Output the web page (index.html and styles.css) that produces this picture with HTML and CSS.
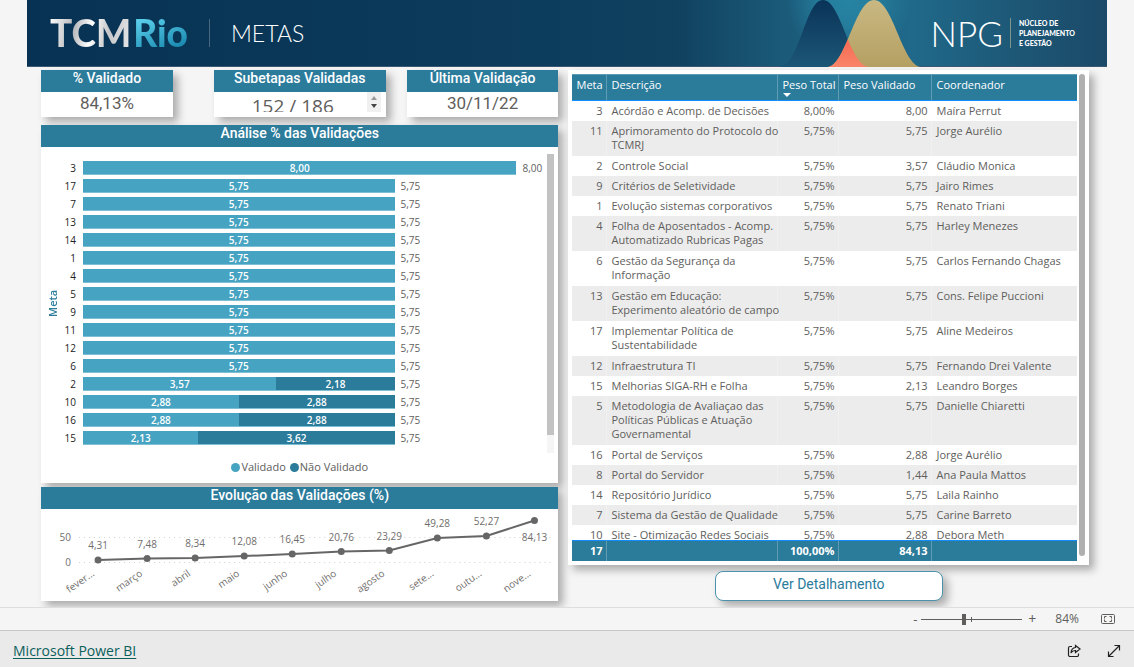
FILE: index.html
```html
<!DOCTYPE html>
<html lang="pt-BR">
<head>
<meta charset="utf-8">
<title>Metas - TCMRio</title>
<link rel="stylesheet" href="styles.css">
</head>
<body>
<main class="report">
  <header class="banner">
    <div class="logo"><span class="logo-tcm">TCM</span><span class="logo-rio">Rio</span></div>
    <h1 class="page-name">METAS</h1>
    <svg class="curves" viewBox="0 0 200 67" aria-hidden="true">
      <defs>
        <linearGradient id="dark" x1="0" y1="0" x2="0" y2="1"><stop offset="0" stop-color="#0a3358"/><stop offset="1" stop-color="#1c5777"/></linearGradient>
        <linearGradient id="gold" x1="0" y1="0" x2="0" y2="1"><stop offset="0" stop-color="#c9b883"/><stop offset="1" stop-color="#b5a062"/></linearGradient>
        <linearGradient id="coral" x1="0" y1="0" x2="0" y2="1"><stop offset=".5" stop-color="#f4634f"/><stop offset="1" stop-color="#f98469"/></linearGradient>
        <radialGradient id="glow" cx="88" cy="0" r="62" gradientUnits="userSpaceOnUse"><stop offset="0" stop-color="#2784a3"/><stop offset=".4" stop-color="#2784a3" stop-opacity=".8"/><stop offset="1" stop-color="#2784a3" stop-opacity="0"/></radialGradient>
        <clipPath id="left-bell"><path d="M18 67C40 64 44 0 62 0C80 0 88 65 108 67Z"/></clipPath>
      </defs>
      <rect width="200" height="67" fill="url(#glow)"/>
      <path d="M18 67C40 64 44 0 62 0C80 0 88 65 108 67Z" fill="url(#dark)"/>
      <path d="M67 67C85 65 94 0 113 0C132 0 141 65 160 67Z" fill="url(#gold)"/>
      <path d="M67 67C85 65 94 0 113 0C132 0 141 65 160 67Z" fill="url(#coral)" clip-path="url(#left-bell)"/>
    </svg>
    <div class="npg"><span class="npg-name">NPG</span><span class="npg-full">NÚCLEO DE<br>PLANEJAMENTO<br>E GESTÃO</span></div>
  </header>

  <div class="columns">
    <div class="left">
      <div class="cards">
        <section class="panel card card-first"><h2 class="title">% Validado</h2><p class="value">84,13%</p></section>
        <section class="panel card"><h2 class="title">Subetapas Validadas</h2>
          <div class="stepper"><p class="value value-clipped">152 / 186</p>
            <div class="steps"><button class="step step-up" aria-label="Anterior"></button><button class="step step-down" aria-label="Próximo"></button></div>
          </div></section>
        <section class="panel card"><h2 class="title">Última Validação</h2><p class="value">30/11/22</p></section>
      </div>

      <section class="panel analysis">
        <h2 class="title">Análise % das Validações</h2>
        <div class="chart">
          <span class="axis-name">Meta</span>
          <div class="bars">
            <div class="bar-row"><span class="cat">3</span><div class="track"><span class="seg done" style="width:100%">8,00</span><span class="total">8,00</span></div></div>
            <div class="bar-row"><span class="cat">17</span><div class="track"><span class="seg done" style="width:71.875%">5,75</span><span class="total">5,75</span></div></div>
            <div class="bar-row"><span class="cat">7</span><div class="track"><span class="seg done" style="width:71.875%">5,75</span><span class="total">5,75</span></div></div>
            <div class="bar-row"><span class="cat">13</span><div class="track"><span class="seg done" style="width:71.875%">5,75</span><span class="total">5,75</span></div></div>
            <div class="bar-row"><span class="cat">14</span><div class="track"><span class="seg done" style="width:71.875%">5,75</span><span class="total">5,75</span></div></div>
            <div class="bar-row"><span class="cat">1</span><div class="track"><span class="seg done" style="width:71.875%">5,75</span><span class="total">5,75</span></div></div>
            <div class="bar-row"><span class="cat">4</span><div class="track"><span class="seg done" style="width:71.875%">5,75</span><span class="total">5,75</span></div></div>
            <div class="bar-row"><span class="cat">5</span><div class="track"><span class="seg done" style="width:71.875%">5,75</span><span class="total">5,75</span></div></div>
            <div class="bar-row"><span class="cat">9</span><div class="track"><span class="seg done" style="width:71.875%">5,75</span><span class="total">5,75</span></div></div>
            <div class="bar-row"><span class="cat">11</span><div class="track"><span class="seg done" style="width:71.875%">5,75</span><span class="total">5,75</span></div></div>
            <div class="bar-row"><span class="cat">12</span><div class="track"><span class="seg done" style="width:71.875%">5,75</span><span class="total">5,75</span></div></div>
            <div class="bar-row"><span class="cat">6</span><div class="track"><span class="seg done" style="width:71.875%">5,75</span><span class="total">5,75</span></div></div>
            <div class="bar-row"><span class="cat">2</span><div class="track"><span class="seg done" style="width:44.625%">3,57</span><span class="seg open" style="width:27.25%">2,18</span><span class="total">5,75</span></div></div>
            <div class="bar-row"><span class="cat">10</span><div class="track"><span class="seg done" style="width:35.9375%">2,88</span><span class="seg open" style="width:35.9375%">2,88</span><span class="total">5,75</span></div></div>
            <div class="bar-row"><span class="cat">16</span><div class="track"><span class="seg done" style="width:35.9375%">2,88</span><span class="seg open" style="width:35.9375%">2,88</span><span class="total">5,75</span></div></div>
            <div class="bar-row"><span class="cat">15</span><div class="track"><span class="seg done" style="width:26.625%">2,13</span><span class="seg open" style="width:45.25%">3,62</span><span class="total">5,75</span></div></div>
          </div>
          <div class="chart-scroll"><div class="chart-thumb"></div></div>
        </div>
        <div class="legend"><span class="key key-done">Validado</span><span class="key key-open">Não Validado</span></div>
      </section>

      <section class="panel evolution">
        <h2 class="title">Evolução das Validações (%)</h2>
        <svg class="line-chart" viewBox="0 0 517 92" role="img" aria-label="Evolução das Validações (%)">
          <path class="grid-line" d="M38 28.500H511M38 53.500H511"/>
          <g class="ticks"><text x="30" y="32">50</text><text x="30" y="57">0</text></g>
          <polyline class="line" points="57,51 106,49.500 154,49 203,47 251,45 300,42.500 348,41.500 396,29 445,27 493,11.500"/>
          <g class="dots"><circle cx="57" cy="51" r="3.500"/><circle cx="106" cy="49.500" r="3.500"/><circle cx="154" cy="49" r="3.500"/><circle cx="203" cy="47" r="3.500"/><circle cx="251" cy="45" r="3.500"/><circle cx="300" cy="42.500" r="3.500"/><circle cx="348" cy="41.500" r="3.500"/><circle cx="396" cy="29" r="3.500"/><circle cx="445" cy="27" r="3.500"/><circle cx="493" cy="11.500" r="3.500"/></g>
          <g class="labels"><text x="57" y="40">4,31</text><text x="106" y="39">7,48</text><text x="154" y="38">8,34</text><text x="203" y="36">12,08</text><text x="251" y="34">16,45</text><text x="300" y="32">20,76</text><text x="348" y="31">23,29</text><text x="396" y="18">49,28</text><text x="445" y="16">52,27</text><text x="493" y="32">84,13</text></g>
          <g class="months">
            <text transform="translate(54 66) rotate(-35)">fever...</text>
            <text transform="translate(102 66) rotate(-35)">março</text>
            <text transform="translate(150 66) rotate(-35)">abril</text>
            <text transform="translate(199 66) rotate(-35)">maio</text>
            <text transform="translate(247 66) rotate(-35)">junho</text>
            <text transform="translate(296 66) rotate(-35)">julho</text>
            <text transform="translate(344 66) rotate(-35)">agosto</text>
            <text transform="translate(393 66) rotate(-35)">sete...</text>
            <text transform="translate(441 66) rotate(-35)">outu...</text>
            <text transform="translate(490 66) rotate(-35)">nove...</text>
          </g>
        </svg>
      </section>
    </div>

    <div class="right">
      <section class="panel table-panel">
        <div class="viewport">
          <table class="goals">
            <colgroup><col class="c-goal"><col class="c-desc"><col class="c-total"><col class="c-valid"><col class="c-owner"></colgroup>
            <thead><tr><th>Meta</th><th>Descrição</th><th class="sorted">Peso Total</th><th>Peso Validado</th><th>Coordenador</th></tr></thead>
            <tbody>
              <tr><td>3</td><td>Acórdão e Acomp. de Decisões</td><td>8,00%</td><td>8,00</td><td>Maíra Perrut</td></tr>
              <tr class="tall"><td>11</td><td>Aprimoramento do Protocolo do<br>TCMRJ</td><td>5,75%</td><td>5,75</td><td>Jorge Aurélio</td></tr>
              <tr><td>2</td><td>Controle Social</td><td>5,75%</td><td>3,57</td><td>Cláudio Monica</td></tr>
              <tr><td>9</td><td>Critérios de Seletividade</td><td>5,75%</td><td>5,75</td><td>Jairo Rimes</td></tr>
              <tr><td>1</td><td>Evolução sistemas corporativos</td><td>5,75%</td><td>5,75</td><td>Renato Triani</td></tr>
              <tr class="tall"><td>4</td><td>Folha de Aposentados - Acomp.<br>Automatizado Rubricas Pagas</td><td>5,75%</td><td>5,75</td><td>Harley Menezes</td></tr>
              <tr class="tall"><td>6</td><td>Gestão da Segurança da<br>Informação</td><td>5,75%</td><td>5,75</td><td>Carlos Fernando Chagas</td></tr>
              <tr class="tall"><td>13</td><td>Gestão em Educação:<br>Experimento aleatório de campo</td><td>5,75%</td><td>5,75</td><td>Cons. Felipe Puccioni</td></tr>
              <tr class="tall"><td>17</td><td>Implementar Política de<br>Sustentabilidade</td><td>5,75%</td><td>5,75</td><td>Aline Medeiros</td></tr>
              <tr><td>12</td><td>Infraestrutura TI</td><td>5,75%</td><td>5,75</td><td>Fernando Drei Valente</td></tr>
              <tr><td>15</td><td>Melhorias SIGA-RH e Folha</td><td>5,75%</td><td>2,13</td><td>Leandro Borges</td></tr>
              <tr class="tall"><td>5</td><td>Metodologia de Avaliaçao das<br>Políticas Públicas e Atuação<br>Governamental</td><td>5,75%</td><td>5,75</td><td>Danielle Chiaretti</td></tr>
              <tr><td>16</td><td>Portal de Serviços</td><td>5,75%</td><td>2,88</td><td>Jorge Aurélio</td></tr>
              <tr><td>8</td><td>Portal do Servidor</td><td>5,75%</td><td>1,44</td><td>Ana Paula Mattos</td></tr>
              <tr><td>14</td><td>Repositório Jurídico</td><td>5,75%</td><td>5,75</td><td>Laila Rainho</td></tr>
              <tr><td>7</td><td>Sistema da Gestão de Qualidade</td><td>5,75%</td><td>5,75</td><td>Carine Barreto</td></tr>
              <tr><td>10</td><td>Site - Otimização Redes Sociais</td><td>5,75%</td><td>2,88</td><td>Debora Meth</td></tr>
            </tbody>
            <tfoot><tr><td>17</td><td></td><td>100,00%</td><td>84,13</td><td></td></tr></tfoot>
          </table>
        </div>
        <div class="table-thumb"></div>
      </section>
      <button class="detail">Ver Detalhamento</button>
    </div>
  </div>
</main>

<div class="zoom-bar">
  <button class="plain" aria-label="Reduzir">-</button>
  <input class="zoom" type="range" min="0" max="200" value="84" aria-label="Zoom">
  <button class="plain plus" aria-label="Ampliar">+</button>
  <span class="percent">84%</span>
  <button class="plain" aria-label="Ajustar à página"><svg width="15" height="12" viewBox="0 0 15 12" fill="none" stroke="#605e5c"><rect x=".5" y="1.500" width="13" height="9" rx="1"/><path d="M3.500 5.500V3.500H5.500M8.500 3.500H10.500V5.500M10.500 6.500V8.500H8.500M5.500 8.500H3.500V6.500"/></svg></button>
</div>
<footer class="brand-bar">
  <a class="brand" href="#">Microsoft Power BI</a>
  <button class="plain" aria-label="Compartilhar"><svg width="14" height="14" viewBox="0 0 14 14" fill="none" stroke="#222" stroke-width="1.200"><path d="M5 2.500H3A1.500 1.500 0 0 0 1.500 4V11A1.500 1.500 0 0 0 3 12.500H10A1.500 1.500 0 0 0 11.500 11V9.500"/><path d="M8.500 1.500L13 5L8.500 8.500V6.500Q5.500 6.300 4 9Q4.300 4 8.500 3.500Z"/></svg></button>
  <button class="plain" aria-label="Tela cheia"><svg width="14" height="14" viewBox="0 0 14 14" fill="none" stroke="#222" stroke-width="1.200"><path d="M1.500 12.500L12.500 1.500M7.500 1.500H12.500V6.500M1.500 7.500V12.500H6.500"/></svg></button>
</footer>
</body>
</html>
```
FILE: styles.css
```css
* { box-sizing: border-box; }

body {
  margin: 0;
  min-height: 100vh;
  display: flex;
  flex-direction: column;
  background: #f5f5f5;
  color: #605e5c;
  font: 11px/14px "Open Sans", "Noto Sans", sans-serif;
}

h1, h2, p { margin: 0; font-weight: 400; }
button { font: inherit; color: inherit; padding: 0; border: 0; background: none; }

.report { flex: 1; padding: 0 27px 6px; overflow: hidden; }

/* Banner */
.banner {
  height: 67px;
  display: flex;
  align-items: center;
  padding: 0 32px 0 23px;
  border-bottom: 1px solid #3c5874;
  background: linear-gradient(90deg, #083253 0, #0b3a5a 40%, #10415f 60%, #1b5a79 70%, #20698a 82%, #1e5a79 90%, #1b4968 100%);
  font-family: Lato, sans-serif;
}
.logo { display: flex; gap: 2px; font-size: 37px; line-height: 42px; font-weight: 900; }
.logo span { color: transparent; background-clip: text; -webkit-background-clip: text; }
.logo-tcm { background-image: linear-gradient(100deg, #fff, #b4b7bb 30%, #fff 50%, #c4c6c9 70%, #e8e8ea); }
.logo-rio { background-image: linear-gradient(160deg, #58cbe8 20%, #1e8db3 80%); }
.page-name {
  margin-left: 21px;
  padding-left: 21px;
  border-left: 1px solid #49677f;
  color: #fff;
  font-size: 23px;
  line-height: 28px;
  font-weight: 300;
}
.curves { width: 200px; height: 67px; margin-left: auto; }
.npg { display: flex; align-items: center; gap: 7px; margin-left: -30px; color: #fff; }
.npg-name { font-size: 35px; line-height: 40px; font-weight: 300; }
.npg-full { padding-left: 8px; border-left: 1px solid #7f9690; font-size: 7px; line-height: 10px; font-weight: 900; }

/* Page grid */
.columns { display: grid; grid-template-columns: 517fr 520fr; gap: 10px; padding: 3px 18px 0 14px; }
.left { display: flex; flex-direction: column; }
.right { display: flex; flex-direction: column; align-items: center; gap: 6px; }

.panel { background: #fff; box-shadow: 5px 5px 8px rgba(0, 0, 0, .3); }
.title {
  height: 22px;
  background: #2b7b9b;
  color: #fff;
  font: 500 14px/17px Roboto, sans-serif;
  text-align: center;
}

.cards { display: grid; grid-template-columns: 152fr 172fr 152fr; gap: 21px; }
.card { height: 47px; }
.card-first { margin-right: 20px; }
.value { font: 17px/23px Roboto, sans-serif; text-align: center; }
.stepper { display: flex; padding-right: 5px; height: 20px; }
.value-clipped { flex: 1; padding-left: 5px; overflow: hidden; font: 19px/28px "Open Sans", sans-serif; }
.steps { width: 14px; background: #f0f0f0; display: flex; flex-direction: column; align-items: center; justify-content: center; gap: 4px; }
.step { border: 3px solid transparent; width: 6px; height: 4px; }
.step-up { border-top: 0; border-bottom: 4px solid #999; }
.step-down { border-bottom: 0; border-top: 4px solid #444; }

/* Stacked bars */
.analysis { margin-top: 8px; height: 358px; }
.chart { display: flex; padding: 7px 4px 0 5px; }
.axis-name { writing-mode: vertical-rl; transform: rotate(180deg); text-align: center; color: #2b7b9b; width: 14px; font-size: 11px; font-weight: 600; }
.bars { flex: 1; padding-top: 5px; }
.bar-row { display: grid; grid-template-columns: 16px 1fr; gap: 7px; height: 18px; align-items: center; font-size: 10px; }
.cat { color: #222; text-align: right; }
.track { display: flex; padding-right: 31px; line-height: 14px; }
.seg { flex: none; height: 14px; color: #fff; text-align: center; font-weight: 600; border-bottom: 1px solid #7fbfd4; }
.done { background: #46a3c2; }
.open { background: #2b7b9b; }
.total { padding-left: 6px; }
.chart-scroll { width: 7px; height: 299px; background: #f5f5f5; }
.chart-thumb { height: 281px; background: #c2c2c2; }
.legend { display: flex; justify-content: center; gap: 4px; padding-top: 7px; }
.key { display: flex; align-items: center; gap: 1px; }
.key::before { content: ""; width: 9px; height: 9px; border-radius: 50%; background: #46a3c2; }
.key-open::before { background: #2b7b9b; }

/* Line chart */
.evolution { margin-top: 4px; }
.line-chart { display: block; width: 100%; font-size: 10px; fill: #706e6c; }
.grid-line { stroke: #d0d0d0; stroke-dasharray: 1 4; fill: none; }
.line { stroke: #666; stroke-width: 2; fill: none; }
.dots { fill: #666; }
.ticks, .months { text-anchor: end; }
.labels { text-anchor: middle; }

/* Goals table */
.table-panel { width: 100%; display: flex; gap: 2px; padding: 4px 4px 4px 4px; }
.viewport { flex: 1; height: 487px; overflow: hidden; }
.goals { width: 100%; table-layout: fixed; border-collapse: separate; border-spacing: 0; }
.c-goal { width: 35px; }
.c-desc { width: 171px; }
.c-total { width: 61px; }
.c-valid { width: 93px; }
.goals th {
  position: sticky;
  top: 0;
  height: 27px;
  padding: 3px 4px 8px;
  background: #2b7b9b;
  border-top: 1px solid #5d9cb4;
  border-bottom: 1px solid #118dff;
  color: #fff;
  font-weight: 500;
  text-align: left;
  white-space: nowrap;
}
.goals td { padding: 3px 4px; vertical-align: top; white-space: nowrap; }
.goals .tall td { padding-bottom: 4px; }
.goals th:not(:last-child), .goals td:not(:last-child) { border-right: 1px solid rgba(255, 255, 255, .25); }
.goals td:nth-child(1), .goals td:nth-child(3), .goals td:nth-child(4) { text-align: right; }
.goals tbody tr:nth-child(even) { background: #ececec; }
.goals tfoot td {
  position: sticky;
  bottom: 0;
  height: 21px;
  background: #2b7b9b;
  border-top: 1px solid #118dff;
  color: #fff;
  font-weight: 700;
}
.sorted::after {
  content: "";
  position: absolute;
  left: 5px;
  bottom: 3px;
  border: 4px solid transparent;
  border-top-color: #fff;
  border-bottom: 0;
}
.table-thumb { width: 6px; height: 482px; border-radius: 3px; background: #b0b0b0; }

.detail {
  width: 228px;
  height: 30px;
  padding-bottom: 5px;
  border: 1px solid #4b93ad;
  border-radius: 8px;
  background: #fff;
  box-shadow: 5px 5px 8px rgba(0, 0, 0, .3);
  color: #2b7b9b;
  font: 14px/18px Roboto, sans-serif;
}

/* Bottom bars */
.zoom-bar { height: 23px; display: flex; align-items: center; justify-content: flex-end; padding-right: 18px; border-top: 1px solid #dedede; }
.zoom { appearance: none; width: 101px; height: 12px; margin: 0 6px 0 4px; background: linear-gradient(#605e5c, #605e5c) center / 100% 1px no-repeat, linear-gradient(#605e5c, #605e5c) center / 1px 5px no-repeat; }
.zoom::-webkit-slider-thumb { appearance: none; width: 4px; height: 11px; background: #605e5c; }
.plain { display: inline-flex; font-size: 13px; }
.plus { font-size: 14px; }
.percent { margin: 0 22px 0 19px; font-size: 12px; }
.brand-bar { height: 37px; display: flex; align-items: center; gap: 26px; padding: 3px 13px 0; border-top: 1px solid #c8c8c8; background: #eaeaea; }
.brand { margin-right: auto; color: #0b5f5b; font-size: 14px; text-underline-offset: 2px; }
```
